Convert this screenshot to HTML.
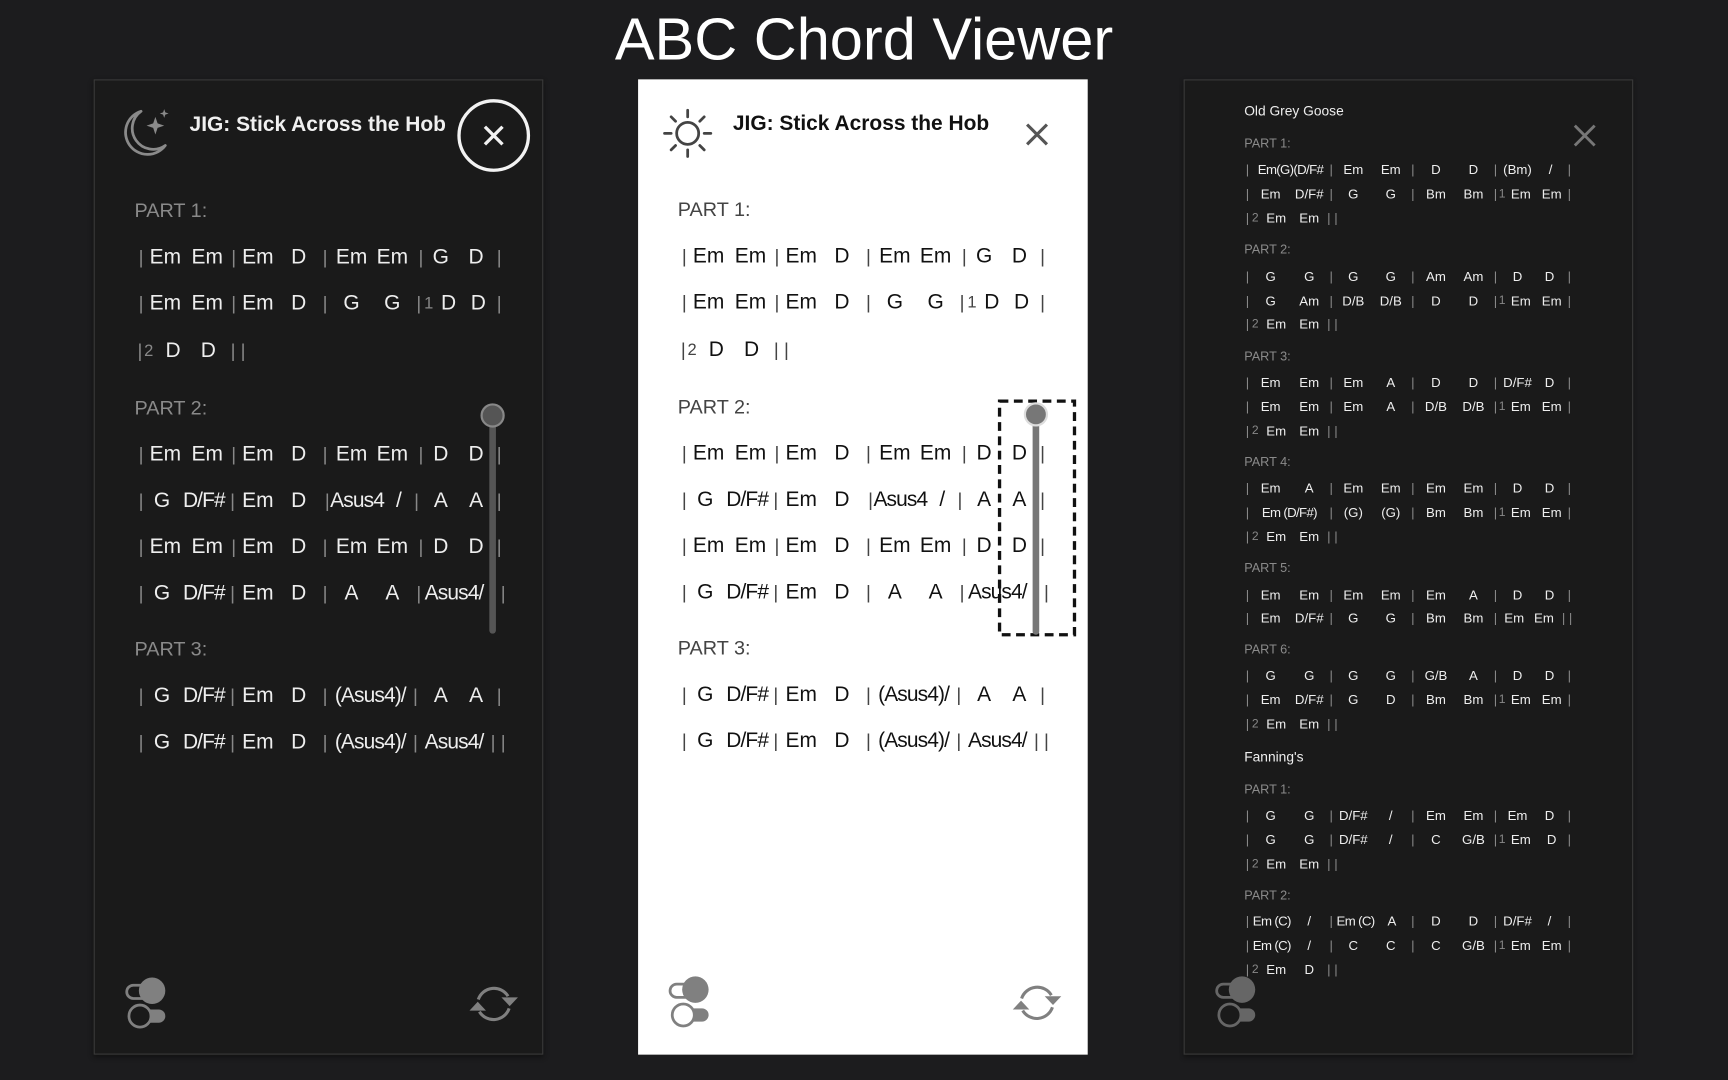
<!DOCTYPE html>
<html><head><meta charset="utf-8"><style>
html,body{margin:0;padding:0;background:#1c1c1e;width:1728px;height:1080px;overflow:hidden}
#w{position:absolute;left:0;top:0;width:1568px;height:980px;transform:scale(1.10204);transform-origin:0 0;font-family:"Liberation Sans","DejaVu Sans",sans-serif}
h1{position:absolute;left:0;width:1568px;top:4px;margin:0;text-align:center;color:#fff;font-weight:normal;font-size:54px;line-height:64px;letter-spacing:0px}
.p{position:absolute;top:72px;width:408px;height:885px;box-sizing:border-box}
.dark{background:#1a1a1a;border:1px solid #3a3a3a;box-shadow:0 2px 4px #111}
.light{background:#fff}
.ttl{position:absolute;left:86px;top:30px;font-size:19px;font-weight:bold;letter-spacing:0px}
.lab{position:absolute;left:36px;font-size:18px;color:#8a8a8a}
.light .lab{color:#444}
.r{position:absolute;left:0;width:408px;height:24px;font-size:19px;line-height:24px}
.r span{position:absolute;transform:translateX(-50%);white-space:nowrap}
.r span.b{color:#888;font-size:17px}
.dark .r{color:#eee}
.light .r{color:#111}
.light .r span.b{color:#444}
.r span.e{color:#888;font-size:15px}
.light .r span.e{color:#444}
.r span.n{letter-spacing:-0.8px}
.s{position:absolute;left:0;width:408px;height:16px;font-size:12px;line-height:16px;color:#eee}
.s span{position:absolute;transform:translateX(-50%);white-space:nowrap}
.s span.b{color:#888}
.s span.e{color:#888;font-size:11px}
.s span.n{letter-spacing:-0.6px}
.sl{position:absolute;left:54px;font-size:11.5px;color:#8a8a8a}
.st{position:absolute;left:54px;font-size:12.5px;color:#eee}
svg{position:absolute;overflow:visible}
</style></head><body><div id="w">
<h1>ABC Chord Viewer</h1>

<!-- LEFT -->
<div class="p dark" style="left:85px">
<svg style="left:22px;top:24px" width="48" height="48" viewBox="0 0 48 48"><path d="M20 4 A20 20 0 1 0 42 35 A17 17 0 0 1 20 4 Z" fill="none" stroke="#8a8a8a" stroke-width="2.5" stroke-linejoin="round"/><path d="M33 9 L35 15 L41 17 L35 19 L33 25 L31 19 L25 17 L31 15 Z" fill="#8a8a8a"/><path d="M41 2 L42 5 L45 6 L42 7 L41 10 L40 7 L37 6 L40 5 Z" fill="#8a8a8a"/></svg>
<div class="ttl" style="color:#f0f0f0">JIG: Stick Across the Hob</div>
<svg style="left:329px;top:17px" width="66" height="66"><circle cx="33" cy="33" r="31.5" fill="none" stroke="#f2f2f2" stroke-width="3"/><path d="M25 25 L41 41 M41 25 L25 41" stroke="#f2f2f2" stroke-width="3"/></svg>
<div class="lab" style="top:108px">PART 1:</div>
<div class="r" style="top:149px"><span class="b" style="left:42px">|</span><span style="left:64px">Em</span><span style="left:102px">Em</span><span class="b" style="left:126px">|</span><span style="left:148px">Em</span><span style="left:185px">D</span><span class="b" style="left:209px">|</span><span style="left:233px">Em</span><span style="left:270px">Em</span><span class="b" style="left:296px">|</span><span style="left:314px">G</span><span style="left:346px">D</span><span class="b" style="left:367px">|</span></div>
<div class="r" style="top:191px"><span class="b" style="left:42px">|</span><span style="left:64px">Em</span><span style="left:102px">Em</span><span class="b" style="left:126px">|</span><span style="left:148px">Em</span><span style="left:185px">D</span><span class="b" style="left:209px">|</span><span style="left:233px">G</span><span style="left:270px">G</span><span class="b" style="left:294px">|</span><span class="e" style="left:303px">1</span><span style="left:321px">D</span><span style="left:348px">D</span><span class="b" style="left:367px">|</span></div>
<div class="r" style="top:234px"><span class="b" style="left:41px">|</span><span class="e" style="left:49px">2</span><span style="left:71px">D</span><span style="left:103px">D</span><span class="b" style="left:130px">| |</span></div>
<div class="lab" style="top:287px">PART 2:</div>
<div class="r" style="top:328px"><span class="b" style="left:42px">|</span><span style="left:64px">Em</span><span style="left:102px">Em</span><span class="b" style="left:126px">|</span><span style="left:148px">Em</span><span style="left:185px">D</span><span class="b" style="left:209px">|</span><span style="left:233px">Em</span><span style="left:270px">Em</span><span class="b" style="left:296px">|</span><span style="left:314px">D</span><span style="left:346px">D</span><span class="b" style="left:367px">|</span></div>
<div class="r" style="top:370px"><span class="b" style="left:42px">|</span><span style="left:61px">G</span><span class="n" style="left:99px">D/F#</span><span class="b" style="left:125px">|</span><span style="left:148px">Em</span><span style="left:185px">D</span><span class="b" style="left:211px">|</span><span class="n" style="left:238px">Asus4</span><span style="left:276px">/</span><span class="b" style="left:292px">|</span><span style="left:314px">A</span><span style="left:346px">A</span><span class="b" style="left:367px">|</span></div>
<div class="r" style="top:412px"><span class="b" style="left:42px">|</span><span style="left:64px">Em</span><span style="left:102px">Em</span><span class="b" style="left:126px">|</span><span style="left:148px">Em</span><span style="left:185px">D</span><span class="b" style="left:209px">|</span><span style="left:233px">Em</span><span style="left:270px">Em</span><span class="b" style="left:296px">|</span><span style="left:314px">D</span><span style="left:346px">D</span><span class="b" style="left:367px">|</span></div>
<div class="r" style="top:454px"><span class="b" style="left:42px">|</span><span style="left:61px">G</span><span class="n" style="left:99px">D/F#</span><span class="b" style="left:125px">|</span><span style="left:148px">Em</span><span style="left:185px">D</span><span class="b" style="left:209px">|</span><span style="left:233px">A</span><span style="left:270px">A</span><span class="b" style="left:294px">|</span><span class="n" style="left:326px">Asus4/</span><span class="b" style="left:366px">| |</span></div>
<div class="lab" style="top:506px">PART 3:</div>
<div class="r" style="top:547px"><span class="b" style="left:42px">|</span><span style="left:61px">G</span><span class="n" style="left:99px">D/F#</span><span class="b" style="left:125px">|</span><span style="left:148px">Em</span><span style="left:185px">D</span><span class="b" style="left:209px">|</span><span class="n" style="left:250px">(Asus4)/</span><span class="b" style="left:291px">|</span><span style="left:314px">A</span><span style="left:346px">A</span><span class="b" style="left:367px">|</span></div>
<div class="r" style="top:589px"><span class="b" style="left:42px">|</span><span style="left:61px">G</span><span class="n" style="left:99px">D/F#</span><span class="b" style="left:125px">|</span><span style="left:148px">Em</span><span style="left:185px">D</span><span class="b" style="left:209px">|</span><span class="n" style="left:250px">(Asus4)/</span><span class="b" style="left:291px">|</span><span class="n" style="left:326px">Asus4/</span><span class="b" style="left:366px">| |</span></div>
<svg style="left:0;top:0" width="408" height="885"><rect x="358" y="304" width="6" height="198" rx="3" fill="#555"/><circle cx="361" cy="304" r="10" fill="#555" stroke="#888" stroke-width="2"/></svg>
<svg style="left:26px;top:813px" width="40" height="50"><rect x="3" y="8" width="24" height="12" rx="6" fill="none" stroke="#808080" stroke-width="2.5"/><circle cx="26" cy="13" r="12" fill="#808080"/><rect x="14" y="30" width="24" height="12" rx="6" fill="#808080"/><circle cx="15" cy="36" r="10" fill="#1a1a1a" stroke="#808080" stroke-width="2.5"/></svg>
<svg style="left:338px;top:818px" width="48" height="40" viewBox="0 0 48 40"><path d="M10 16 A15 15 0 0 1 37 13" fill="none" stroke="#808080" stroke-width="2.8"/><path d="M38 24 A15 15 0 0 1 11 27" fill="none" stroke="#808080" stroke-width="2.8"/><path d="M31 14 L46 14 L38.5 22 Z" fill="#808080"/><path d="M2 26 L17 26 L9.5 18 Z" fill="#808080"/></svg>
</div>

<!-- MIDDLE -->
<div class="p light" style="left:579px">
<svg style="left:22px;top:26px" width="46" height="46" viewBox="0 0 46 46"><circle cx="23" cy="23" r="10" fill="none" stroke="#444" stroke-width="2.5"/><g stroke="#444" stroke-width="2.5" stroke-linecap="round"><path d="M23 2v6M23 38v6M2 23h6M38 23h6M8 8l4 4M34 34l4 4M38 8l-4 4M12 34l-4 4"/></g></svg>
<div class="ttl" style="color:#111">JIG: Stick Across the Hob</div>
<svg style="left:352px;top:40px" width="20" height="20"><path d="M1 1 L19 19 M19 1 L1 19" stroke="#555" stroke-width="2.8"/></svg>
<div class="lab" style="top:108px">PART 1:</div>
<div class="r" style="top:149px"><span class="b" style="left:42px">|</span><span style="left:64px">Em</span><span style="left:102px">Em</span><span class="b" style="left:126px">|</span><span style="left:148px">Em</span><span style="left:185px">D</span><span class="b" style="left:209px">|</span><span style="left:233px">Em</span><span style="left:270px">Em</span><span class="b" style="left:296px">|</span><span style="left:314px">G</span><span style="left:346px">D</span><span class="b" style="left:367px">|</span></div>
<div class="r" style="top:191px"><span class="b" style="left:42px">|</span><span style="left:64px">Em</span><span style="left:102px">Em</span><span class="b" style="left:126px">|</span><span style="left:148px">Em</span><span style="left:185px">D</span><span class="b" style="left:209px">|</span><span style="left:233px">G</span><span style="left:270px">G</span><span class="b" style="left:294px">|</span><span class="e" style="left:303px">1</span><span style="left:321px">D</span><span style="left:348px">D</span><span class="b" style="left:367px">|</span></div>
<div class="r" style="top:234px"><span class="b" style="left:41px">|</span><span class="e" style="left:49px">2</span><span style="left:71px">D</span><span style="left:103px">D</span><span class="b" style="left:130px">| |</span></div>
<div class="lab" style="top:287px">PART 2:</div>
<div class="r" style="top:328px"><span class="b" style="left:42px">|</span><span style="left:64px">Em</span><span style="left:102px">Em</span><span class="b" style="left:126px">|</span><span style="left:148px">Em</span><span style="left:185px">D</span><span class="b" style="left:209px">|</span><span style="left:233px">Em</span><span style="left:270px">Em</span><span class="b" style="left:296px">|</span><span style="left:314px">D</span><span style="left:346px">D</span><span class="b" style="left:367px">|</span></div>
<div class="r" style="top:370px"><span class="b" style="left:42px">|</span><span style="left:61px">G</span><span class="n" style="left:99px">D/F#</span><span class="b" style="left:125px">|</span><span style="left:148px">Em</span><span style="left:185px">D</span><span class="b" style="left:211px">|</span><span class="n" style="left:238px">Asus4</span><span style="left:276px">/</span><span class="b" style="left:292px">|</span><span style="left:314px">A</span><span style="left:346px">A</span><span class="b" style="left:367px">|</span></div>
<div class="r" style="top:412px"><span class="b" style="left:42px">|</span><span style="left:64px">Em</span><span style="left:102px">Em</span><span class="b" style="left:126px">|</span><span style="left:148px">Em</span><span style="left:185px">D</span><span class="b" style="left:209px">|</span><span style="left:233px">Em</span><span style="left:270px">Em</span><span class="b" style="left:296px">|</span><span style="left:314px">D</span><span style="left:346px">D</span><span class="b" style="left:367px">|</span></div>
<div class="r" style="top:454px"><span class="b" style="left:42px">|</span><span style="left:61px">G</span><span class="n" style="left:99px">D/F#</span><span class="b" style="left:125px">|</span><span style="left:148px">Em</span><span style="left:185px">D</span><span class="b" style="left:209px">|</span><span style="left:233px">A</span><span style="left:270px">A</span><span class="b" style="left:294px">|</span><span class="n" style="left:326px">Asus4/</span><span class="b" style="left:366px">| |</span></div>
<div class="lab" style="top:506px">PART 3:</div>
<div class="r" style="top:547px"><span class="b" style="left:42px">|</span><span style="left:61px">G</span><span class="n" style="left:99px">D/F#</span><span class="b" style="left:125px">|</span><span style="left:148px">Em</span><span style="left:185px">D</span><span class="b" style="left:209px">|</span><span class="n" style="left:250px">(Asus4)/</span><span class="b" style="left:291px">|</span><span style="left:314px">A</span><span style="left:346px">A</span><span class="b" style="left:367px">|</span></div>
<div class="r" style="top:589px"><span class="b" style="left:42px">|</span><span style="left:61px">G</span><span class="n" style="left:99px">D/F#</span><span class="b" style="left:125px">|</span><span style="left:148px">Em</span><span style="left:185px">D</span><span class="b" style="left:209px">|</span><span class="n" style="left:250px">(Asus4)/</span><span class="b" style="left:291px">|</span><span class="n" style="left:326px">Asus4/</span><span class="b" style="left:366px">| |</span></div>
<svg style="left:0;top:0" width="408" height="885"><rect x="328" y="292" width="68" height="212" fill="none" stroke="#111" stroke-width="3" stroke-dasharray="8 5"/><rect x="358" y="304" width="6" height="200" rx="3" fill="#777"/><circle cx="361" cy="304" r="10" fill="#777" stroke="#ddd" stroke-width="2"/></svg>
<svg style="left:26px;top:813px" width="40" height="50"><rect x="3" y="8" width="24" height="12" rx="6" fill="none" stroke="#808080" stroke-width="2.5"/><circle cx="26" cy="13" r="12" fill="#808080"/><rect x="14" y="30" width="24" height="12" rx="6" fill="#808080"/><circle cx="15" cy="36" r="10" fill="#fff" stroke="#808080" stroke-width="2.5"/></svg>
<svg style="left:338px;top:818px" width="48" height="40" viewBox="0 0 48 40"><path d="M10 16 A15 15 0 0 1 37 13" fill="none" stroke="#808080" stroke-width="2.8"/><path d="M38 24 A15 15 0 0 1 11 27" fill="none" stroke="#808080" stroke-width="2.8"/><path d="M31 14 L46 14 L38.5 22 Z" fill="#808080"/><path d="M2 26 L17 26 L9.5 18 Z" fill="#808080"/></svg>
</div>

<!-- RIGHT -->
<div class="p dark" style="left:1074px">
<div class="st" style="top:21px">Old Grey Goose</div>
<svg style="left:353px;top:40px" width="20" height="20"><path d="M1 1 L19 19 M19 1 L1 19" stroke="#777" stroke-width="2.6"/></svg>

<div class="sl" style="top:52px">PART 1:</div>
<div class="s" style="top:73px"><span class="b" style="left:57px">|</span><span class="n" style="left:96px">Em(G)(D/F#</span><span class="b" style="left:133px">|</span><span style="left:153px">Em</span><span style="left:187px">Em</span><span class="b" style="left:207px">|</span><span style="left:228px">D</span><span style="left:262px">D</span><span class="b" style="left:282px">|</span><span style="left:302px">(Bm)</span><span style="left:332px">/</span><span class="b" style="left:349px">|</span></div>
<div class="s" style="top:95px"><span class="b" style="left:57px">|</span><span style="left:78px">Em</span><span style="left:113px">D/F#</span><span class="b" style="left:133px">|</span><span style="left:153px">G</span><span style="left:187px">G</span><span class="b" style="left:207px">|</span><span style="left:228px">Bm</span><span style="left:262px">Bm</span><span class="b" style="left:282px">|</span><span class="e" style="left:288px">1</span><span style="left:305px">Em</span><span style="left:333px">Em</span><span class="b" style="left:349px">|</span></div>
<div class="s" style="top:117px"><span class="b" style="left:57px">|</span><span class="e" style="left:64px">2</span><span style="left:83px">Em</span><span style="left:113px">Em</span><span class="b" style="left:134px">| |</span></div>

<div class="sl" style="top:148px">PART 2:</div>
<div class="s" style="top:170px"><span class="b" style="left:57px">|</span><span style="left:78px">G</span><span style="left:113px">G</span><span class="b" style="left:133px">|</span><span style="left:153px">G</span><span style="left:187px">G</span><span class="b" style="left:207px">|</span><span style="left:228px">Am</span><span style="left:262px">Am</span><span class="b" style="left:282px">|</span><span style="left:302px">D</span><span style="left:331px">D</span><span class="b" style="left:349px">|</span></div>
<div class="s" style="top:192px"><span class="b" style="left:57px">|</span><span style="left:78px">G</span><span style="left:113px">Am</span><span class="b" style="left:133px">|</span><span style="left:153px">D/B</span><span style="left:187px">D/B</span><span class="b" style="left:207px">|</span><span style="left:228px">D</span><span style="left:262px">D</span><span class="b" style="left:282px">|</span><span class="e" style="left:288px">1</span><span style="left:305px">Em</span><span style="left:333px">Em</span><span class="b" style="left:349px">|</span></div>
<div class="s" style="top:213px"><span class="b" style="left:57px">|</span><span class="e" style="left:64px">2</span><span style="left:83px">Em</span><span style="left:113px">Em</span><span class="b" style="left:134px">| |</span></div>

<div class="sl" style="top:245px">PART 3:</div>
<div class="s" style="top:266px"><span class="b" style="left:57px">|</span><span style="left:78px">Em</span><span style="left:113px">Em</span><span class="b" style="left:133px">|</span><span style="left:153px">Em</span><span style="left:187px">A</span><span class="b" style="left:207px">|</span><span style="left:228px">D</span><span style="left:262px">D</span><span class="b" style="left:282px">|</span><span style="left:302px">D/F#</span><span style="left:331px">D</span><span class="b" style="left:349px">|</span></div>
<div class="s" style="top:288px"><span class="b" style="left:57px">|</span><span style="left:78px">Em</span><span style="left:113px">Em</span><span class="b" style="left:133px">|</span><span style="left:153px">Em</span><span style="left:187px">A</span><span class="b" style="left:207px">|</span><span style="left:228px">D/B</span><span style="left:262px">D/B</span><span class="b" style="left:282px">|</span><span class="e" style="left:288px">1</span><span style="left:305px">Em</span><span style="left:333px">Em</span><span class="b" style="left:349px">|</span></div>
<div class="s" style="top:310px"><span class="b" style="left:57px">|</span><span class="e" style="left:64px">2</span><span style="left:83px">Em</span><span style="left:113px">Em</span><span class="b" style="left:134px">| |</span></div>

<div class="sl" style="top:341px">PART 4:</div>
<div class="s" style="top:362px"><span class="b" style="left:57px">|</span><span style="left:78px">Em</span><span style="left:113px">A</span><span class="b" style="left:133px">|</span><span style="left:153px">Em</span><span style="left:187px">Em</span><span class="b" style="left:207px">|</span><span style="left:228px">Em</span><span style="left:262px">Em</span><span class="b" style="left:282px">|</span><span style="left:302px">D</span><span style="left:331px">D</span><span class="b" style="left:349px">|</span></div>
<div class="s" style="top:384px"><span class="b" style="left:57px">|</span><span class="n" style="left:95px">Em (D/F#)</span><span class="b" style="left:133px">|</span><span style="left:153px">(G)</span><span style="left:187px">(G)</span><span class="b" style="left:207px">|</span><span style="left:228px">Bm</span><span style="left:262px">Bm</span><span class="b" style="left:282px">|</span><span class="e" style="left:288px">1</span><span style="left:305px">Em</span><span style="left:333px">Em</span><span class="b" style="left:349px">|</span></div>
<div class="s" style="top:406px"><span class="b" style="left:57px">|</span><span class="e" style="left:64px">2</span><span style="left:83px">Em</span><span style="left:113px">Em</span><span class="b" style="left:134px">| |</span></div>

<div class="sl" style="top:437px">PART 5:</div>
<div class="s" style="top:459px"><span class="b" style="left:57px">|</span><span style="left:78px">Em</span><span style="left:113px">Em</span><span class="b" style="left:133px">|</span><span style="left:153px">Em</span><span style="left:187px">Em</span><span class="b" style="left:207px">|</span><span style="left:228px">Em</span><span style="left:262px">A</span><span class="b" style="left:282px">|</span><span style="left:302px">D</span><span style="left:331px">D</span><span class="b" style="left:349px">|</span></div>
<div class="s" style="top:480px"><span class="b" style="left:57px">|</span><span style="left:78px">Em</span><span style="left:113px">D/F#</span><span class="b" style="left:133px">|</span><span style="left:153px">G</span><span style="left:187px">G</span><span class="b" style="left:207px">|</span><span style="left:228px">Bm</span><span style="left:262px">Bm</span><span class="b" style="left:282px">|</span><span style="left:299px">Em</span><span style="left:326px">Em</span><span class="b" style="left:347px">| |</span></div>

<div class="sl" style="top:511px">PART 6:</div>
<div class="s" style="top:532px"><span class="b" style="left:57px">|</span><span style="left:78px">G</span><span style="left:113px">G</span><span class="b" style="left:133px">|</span><span style="left:153px">G</span><span style="left:187px">G</span><span class="b" style="left:207px">|</span><span style="left:228px">G/B</span><span style="left:262px">A</span><span class="b" style="left:282px">|</span><span style="left:302px">D</span><span style="left:331px">D</span><span class="b" style="left:349px">|</span></div>
<div class="s" style="top:554px"><span class="b" style="left:57px">|</span><span style="left:78px">Em</span><span style="left:113px">D/F#</span><span class="b" style="left:133px">|</span><span style="left:153px">G</span><span style="left:187px">D</span><span class="b" style="left:207px">|</span><span style="left:228px">Bm</span><span style="left:262px">Bm</span><span class="b" style="left:282px">|</span><span class="e" style="left:288px">1</span><span style="left:305px">Em</span><span style="left:333px">Em</span><span class="b" style="left:349px">|</span></div>
<div class="s" style="top:576px"><span class="b" style="left:57px">|</span><span class="e" style="left:64px">2</span><span style="left:83px">Em</span><span style="left:113px">Em</span><span class="b" style="left:134px">| |</span></div>

<div class="st" style="top:607px">Fanning's</div>
<div class="sl" style="top:638px">PART 1:</div>
<div class="s" style="top:659px"><span class="b" style="left:57px">|</span><span style="left:78px">G</span><span style="left:113px">G</span><span class="b" style="left:133px">|</span><span style="left:153px">D/F#</span><span style="left:187px">/</span><span class="b" style="left:207px">|</span><span style="left:228px">Em</span><span style="left:262px">Em</span><span class="b" style="left:282px">|</span><span style="left:302px">Em</span><span style="left:331px">D</span><span class="b" style="left:349px">|</span></div>
<div class="s" style="top:681px"><span class="b" style="left:57px">|</span><span style="left:78px">G</span><span style="left:113px">G</span><span class="b" style="left:133px">|</span><span style="left:153px">D/F#</span><span style="left:187px">/</span><span class="b" style="left:207px">|</span><span style="left:228px">C</span><span style="left:262px">G/B</span><span class="b" style="left:282px">|</span><span class="e" style="left:288px">1</span><span style="left:305px">Em</span><span style="left:333px">D</span><span class="b" style="left:349px">|</span></div>
<div class="s" style="top:703px"><span class="b" style="left:57px">|</span><span class="e" style="left:64px">2</span><span style="left:83px">Em</span><span style="left:113px">Em</span><span class="b" style="left:134px">| |</span></div>

<div class="sl" style="top:734px">PART 2:</div>
<div class="s" style="top:755px"><span class="b" style="left:57px">|</span><span class="n" style="left:79px">Em (C)</span><span style="left:113px">/</span><span class="b" style="left:133px">|</span><span class="n" style="left:155px">Em (C)</span><span style="left:188px">A</span><span class="b" style="left:207px">|</span><span style="left:228px">D</span><span style="left:262px">D</span><span class="b" style="left:282px">|</span><span style="left:302px">D/F#</span><span style="left:331px">/</span><span class="b" style="left:349px">|</span></div>
<div class="s" style="top:777px"><span class="b" style="left:57px">|</span><span class="n" style="left:79px">Em (C)</span><span style="left:113px">/</span><span class="b" style="left:133px">|</span><span style="left:153px">C</span><span style="left:187px">C</span><span class="b" style="left:207px">|</span><span style="left:228px">C</span><span style="left:262px">G/B</span><span class="b" style="left:282px">|</span><span class="e" style="left:288px">1</span><span style="left:305px">Em</span><span style="left:333px">Em</span><span class="b" style="left:349px">|</span></div>
<div class="s" style="top:799px"><span class="b" style="left:57px">|</span><span class="e" style="left:64px">2</span><span style="left:83px">Em</span><span style="left:113px">D</span><span class="b" style="left:134px">| |</span></div>

<svg style="left:26px;top:812px" width="40" height="50"><rect x="3" y="8" width="24" height="12" rx="6" fill="none" stroke="#666" stroke-width="2.5"/><circle cx="26" cy="13" r="12" fill="#666"/><rect x="14" y="30" width="24" height="12" rx="6" fill="#666"/><circle cx="15" cy="36" r="10" fill="#1a1a1a" stroke="#666" stroke-width="2.5"/></svg>
</div>
</div></body></html>
